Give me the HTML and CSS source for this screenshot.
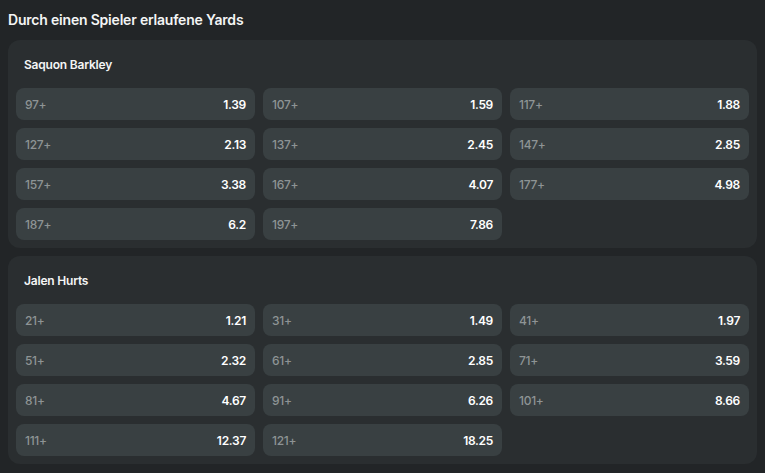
FILE: index.html
```html
<!DOCTYPE html>
<html lang="de">
<head>
    <meta charset="UTF-8">
    <title>Durch einen Spieler erlaufene Yards</title>
    <link rel="stylesheet" href="styles.css">
</head>
<body>
    <h1 class="market-title">Durch einen Spieler erlaufene Yards</h1>

    <!-- Saquon Barkley -->
    <div class="player-card">
        <div class="player-name">Saquon Barkley</div>
        <div class="odds-grid">
            <div class="odd"><span class="line">97+</span><span class="price">1.39</span></div>
            <div class="odd"><span class="line">107+</span><span class="price">1.59</span></div>
            <div class="odd"><span class="line">117+</span><span class="price">1.88</span></div>
            <div class="odd"><span class="line">127+</span><span class="price">2.13</span></div>
            <div class="odd"><span class="line">137+</span><span class="price">2.45</span></div>
            <div class="odd"><span class="line">147+</span><span class="price">2.85</span></div>
            <div class="odd"><span class="line">157+</span><span class="price">3.38</span></div>
            <div class="odd"><span class="line">167+</span><span class="price">4.07</span></div>
            <div class="odd"><span class="line">177+</span><span class="price">4.98</span></div>
            <div class="odd"><span class="line">187+</span><span class="price">6.2</span></div>
            <div class="odd"><span class="line">197+</span><span class="price">7.86</span></div>
        </div>
    </div>

    <!-- Jalen Hurts -->
    <div class="player-card">
        <div class="player-name">Jalen Hurts</div>
        <div class="odds-grid">
            <div class="odd"><span class="line">21+</span><span class="price">1.21</span></div>
            <div class="odd"><span class="line">31+</span><span class="price">1.49</span></div>
            <div class="odd"><span class="line">41+</span><span class="price">1.97</span></div>
            <div class="odd"><span class="line">51+</span><span class="price">2.32</span></div>
            <div class="odd"><span class="line">61+</span><span class="price">2.85</span></div>
            <div class="odd"><span class="line">71+</span><span class="price">3.59</span></div>
            <div class="odd"><span class="line">81+</span><span class="price">4.67</span></div>
            <div class="odd"><span class="line">91+</span><span class="price">6.26</span></div>
            <div class="odd"><span class="line">101+</span><span class="price">8.66</span></div>
            <div class="odd"><span class="line">111+</span><span class="price">12.37</span></div>
            <div class="odd"><span class="line">121+</span><span class="price">18.25</span></div>
        </div>
    </div>
</body>
</html>
```

FILE: styles.css
```css
* {
    margin: 0;
    padding: 0;
    box-sizing: border-box;
}

body {
    font-family: 'Inter', 'Noto Sans', sans-serif;
    background-color: #222527;
    color: #ffffff;
    padding: 0 8px;
}

.market-title {
    font-size: 14px;
    font-weight: 600;
    line-height: 40px;
    height: 40px;
    color: #f4f5f5;
    letter-spacing: -0.2px;
}

.player-card {
    background-color: #2a2e30;
    border-radius: 12px;
    padding: 0 8px 8px;
    margin-bottom: 8px;
}

.player-name {
    font-size: 12px;
    font-weight: 600;
    line-height: 16px;
    padding: 17px 8px 15px;
    color: #f4f5f5;
    letter-spacing: -0.2px;
}

.odds-grid {
    display: grid;
    grid-template-columns: repeat(3, 1fr);
    gap: 8px;
}

.odd {
    display: flex;
    justify-content: space-between;
    align-items: center;
    height: 32px;
    padding: 0 9px;
    background-color: #394042;
    border-radius: 8px;
    font-size: 12px;
    letter-spacing: -0.3px;
}

.line {
    color: #8e9495;
    font-weight: 500;
}

.price {
    font-weight: 600;
    color: #ffffff;
}
```
